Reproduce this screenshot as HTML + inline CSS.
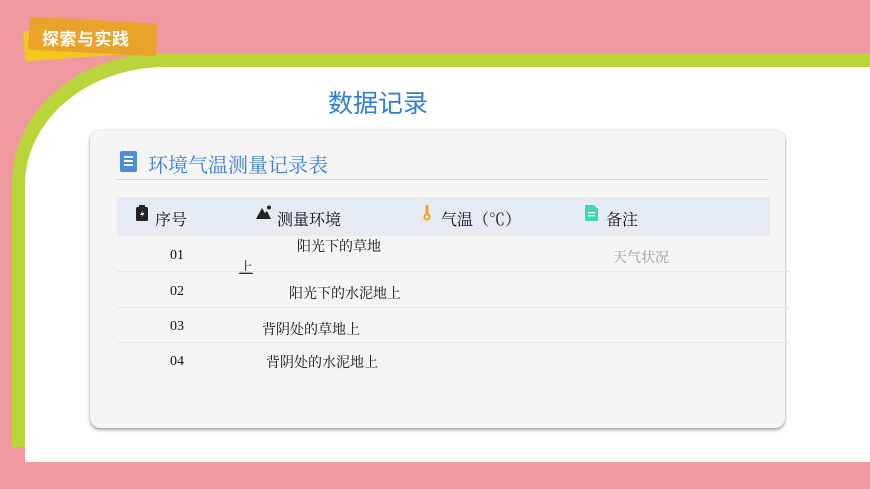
<!DOCTYPE html>
<html><head><meta charset="utf-8"><style>
*{margin:0;padding:0;box-sizing:border-box}
body{width:870px;height:489px;background:#f0989f;position:relative;overflow:hidden;font-family:"Liberation Serif","Noto Serif CJK SC",serif}
.green{position:absolute;left:12px;top:53px;width:870px;height:394px;background:#bad43a;border-top-left-radius:150px 130px}
.white{position:absolute;left:25px;top:67px;width:860px;height:395px;background:#fff;border-top-left-radius:140px 118px}
.y{position:absolute;left:24px;top:27px;width:124px;height:30px;background:#f2c81f;transform:rotate(-4deg);border-radius:3px}
.o{position:absolute;left:29px;top:20px;width:128px;height:33px;background:#eba22a;transform:rotate(3deg);border-radius:3px}
.tag{position:absolute;left:42px;top:25px;color:#fff;font:bold 17px "Liberation Sans","Noto Sans CJK SC",sans-serif;letter-spacing:0.5px}
.h1{position:absolute;left:328px;top:84px;font:25px "Liberation Sans","Noto Sans CJK SC",sans-serif;color:#2f7fd8}
.card{position:absolute;left:90px;top:130px;width:695px;height:298px;background:#f5f5f5;border-radius:10px;box-shadow:0 2px 3px rgba(0,0,0,.35),0 0 2px rgba(0,0,0,.12)}
.ti{position:absolute;left:120px;top:151px;width:17px;height:21px;background:#4a8ee0;border-radius:2px}
.ti i{position:absolute;left:4px;width:9px;height:1.5px;background:#fff}
.tt{position:absolute;left:148px;top:149px;font:20px "Liberation Serif","Noto Serif CJK SC",serif;color:#3a7fd5}
.ln{position:absolute;left:117px;top:179px;width:651px;height:1px;background:#d5d5d5}
.hd{position:absolute;left:117px;top:197px;width:653px;height:39px;background:#e4ebf3}
.t{position:absolute;white-space:nowrap;color:#111}
.hx{font-size:16px;top:207px}
.r{font-size:14px}
.rl{position:absolute;left:117px;width:673px;height:1px;background:#e6e6e6}
</style></head><body>
<div class="green"></div><div class="white"></div>
<div class="y"></div><div class="o"></div><div class="tag">探索与实践</div>
<div class="h1">数据记录</div>
<div class="card"></div>
<div class="ti"><i style="top:5px"></i><i style="top:9px"></i><i style="top:13px"></i></div>
<div class="tt">环境气温测量记录表</div>
<div class="ln"></div>
<div class="hd"></div>
<svg style="position:absolute;left:136px;top:205px" width="12" height="16"><rect x="0" y="2" width="12" height="14" rx="1.5" fill="#222"/><rect x="3" y="0" width="6" height="3" fill="#222"/><path d="M7 5 L4 10 H6.5 L5 13 L8.5 8 H6 Z" fill="#fff"/></svg>
<div class="t hx" style="left:155px">序号</div>
<svg style="position:absolute;left:256px;top:205px" width="16" height="14"><path d="M0 14 L6 3 L9 8 L11 6 L15 14 Z" fill="#222"/><circle cx="13" cy="2.5" r="2" fill="#222"/></svg>
<div class="t hx" style="left:277px">测量环境</div>
<svg style="position:absolute;left:423px;top:205px" width="8" height="16"><rect x="2.5" y="0" width="3" height="11" rx="1.5" fill="#f0a020"/><circle cx="4" cy="12" r="3.5" fill="#f0a020"/><circle cx="4" cy="12" r="1.5" fill="#fff"/></svg>
<div class="t hx" style="left:441px">气温（℃）</div>
<svg style="position:absolute;left:585px;top:205px" width="13" height="16"><path d="M0 1 Q0 0 1 0 H9 L13 4 V15 Q13 16 12 16 H1 Q0 16 0 15 Z" fill="#3fd9b0"/><rect x="3" y="7" width="7" height="1.3" fill="#fff"/><rect x="3" y="10" width="7" height="1.3" fill="#fff"/></svg>
<div class="t hx" style="left:606px">备注</div>
<div class="t r" style="left:170px;top:248px">01</div>
<div class="t r" style="left:297px;top:236px">阳光下的草地</div>
<div class="t r" style="left:239px;top:257px;text-decoration:underline;color:#333">上</div>
<div class="t r" style="left:613px;top:247px;color:#999">天气状况</div>
<div class="rl" style="top:271px"></div>
<div class="t r" style="left:170px;top:284px">02</div>
<div class="t r" style="left:289px;top:283px">阳光下的水泥地上</div>
<div class="rl" style="top:307px"></div>
<div class="t r" style="left:170px;top:319px">03</div>
<div class="t r" style="left:262px;top:319px">背阴处的草地上</div>
<div class="rl" style="top:342px"></div>
<div class="t r" style="left:170px;top:354px">04</div>
<div class="t r" style="left:266px;top:352px">背阴处的水泥地上</div>
</body></html>
